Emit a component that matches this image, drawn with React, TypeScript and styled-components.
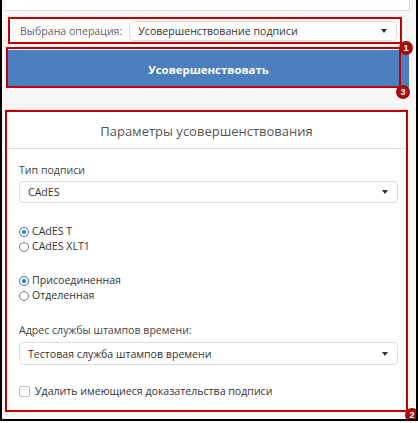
import React from "react";
import styled, { createGlobalStyle } from "styled-components";

const Global = createGlobalStyle`
  html, body { margin: 0; padding: 0; background: #ffffff; }
  body { font-family: "Open Sans", "Liberation Sans", sans-serif; }
  * { box-sizing: border-box; }
`;

const Frame = styled.div`
  width: 418px;
  height: 421px;
  border-left: 2px solid #000;
  border-right: 2px solid #000;
  border-bottom: 2px solid #000;
  background: #f6f6f6;
  display: flex;
  flex-direction: column;
  overflow: hidden;
  position: relative;
`;

const TopStrip = styled.div`
  height: 11px;
  margin: 0 6px 0 4px;
  background: #fff;
  border-bottom: 1px solid #dcdcdc;
  border-right: 1px solid #dcdcdc;
  flex-shrink: 0;
`;

const Anchor = styled.div`
  position: relative;
`;

const OperationRow = styled.div`
  margin: 6px 0 0 6px;
  width: 394px;
  height: 27px;
  border: 2px solid #c00000;
  background: #fff;
  display: flex;
  align-items: center;
  padding: 0 3px 0 10px;
  gap: 7px;
`;

const RowLabel = styled.span`
  font-size: 10.6px;
  color: #666;
  white-space: nowrap;
`;

const Select = styled.div<{ $h: number }>`
  flex: 1;
  height: ${(p) => p.$h}px;
  border: 1px solid #dedede;
  border-radius: 4px;
  background: #fff;
  display: flex;
  align-items: center;
  justify-content: space-between;
  padding: 0 9px 0 8px;
  font-size: 10.6px;
  color: #333;
`;

const Caret = styled.span`
  width: 0;
  height: 0;
  border-left: 3.5px solid transparent;
  border-right: 3.5px solid transparent;
  border-top: 4px solid #333;
`;

const Badge = styled.span<{ $top: number; $left: number }>`
  position: absolute;
  left: ${(p) => p.$left}px;
  top: ${(p) => p.$top}px;
  width: 14px;
  height: 14px;
  border-radius: 50%;
  background: #a20d0d;
  color: #fff;
  font-family: "Liberation Sans", sans-serif;
  font-weight: 700;
  font-size: 9px;
  line-height: 14px;
  text-align: center;
  z-index: 2;
`;

const ButtonWrap = styled.div`
  position: relative;
  margin: 3px 0 0 4px;
  width: 403px;
  padding-top: 3px;
`;

const ActionButton = styled.div`
  height: 38px;
  margin-left: 2px;
  background: #4b7fc0;
  color: #fff;
  font-weight: 700;
  font-size: 11.4px;
  display: flex;
  align-items: center;
  justify-content: center;
`;

const RedOverlay = styled.div`
  position: absolute;
  left: 0;
  top: 0;
  width: 395px;
  bottom: 0;
  border: 2px solid #c00000;
  pointer-events: none;
`;

const ParamsCard = styled.div`
  position: relative;
  margin: 22px 0 0 3px;
  width: 403px;
  height: 302px;
  background: #fff;
  border: 2px solid #c00000;
  box-shadow: 0 -1px 0 #dcdcdc;
  display: flex;
  flex-direction: column;
`;

const CardHeader = styled.div`
  height: 37px;
  border-bottom: 1px solid #dedede;
  display: flex;
  align-items: center;
  justify-content: center;
  font-size: 13px;
  color: #555;
  padding-top: 1px;
`;

const CardBody = styled.div`
  padding: 13px 8px 0 12px;
  display: flex;
  flex-direction: column;
`;

const FieldLabel = styled.div`
  font-size: 10.6px;
  color: #444;
  line-height: 16px;
`;

const SelectWrap = styled.div<{ $mt: number }>`
  margin-top: ${(p) => p.$mt}px;
  display: flex;
`;

const Group = styled.div<{ $mt: number }>`
  margin-top: ${(p) => p.$mt}px;
  display: flex;
  flex-direction: column;
`;

const Option = styled.div`
  display: flex;
  align-items: center;
  height: 15px;
  line-height: 15px;
  font-size: 10.6px;
  color: #333;
  gap: 2px;
`;

const Radio = styled.span<{ $on?: boolean }>`
  width: 10px;
  height: 10px;
  border-radius: 50%;
  border: 1px solid ${(p) => (p.$on ? "#2f6fd0" : "#777")};
  display: flex;
  align-items: center;
  justify-content: center;
  margin-right: 1px;
  &::after {
    content: "";
    width: 4px;
    height: 4px;
    border-radius: 50%;
    background: ${(p) => (p.$on ? "#2f6fd0" : "transparent")};
  }
`;

const CheckRow = styled.div`
  margin-top: 19px;
  display: flex;
  align-items: center;
  height: 15px;
  line-height: 15px;
  gap: 5px;
  font-size: 10.6px;
  color: #333;
`;

const CheckBox = styled.span`
  width: 11px;
  height: 11px;
  border: 1px solid #bdbdbd;
  border-radius: 2px;
  background: #fff;
`;

export default function App() {
  return (
    <>
      <Global />
      <Frame>
        <TopStrip />
        <Anchor>
          <OperationRow>
            <RowLabel>Выбрана операция:</RowLabel>
            <Select $h={20}>
              <span>Усовершенствование подписи</span>
              <Caret />
            </Select>
          </OperationRow>
          <Badge $left={397} $top={30}>1</Badge>
        </Anchor>
        <ButtonWrap>
          <ActionButton>Усовершенствовать</ActionButton>
          <RedOverlay />
          <Badge $left={390} $top={38}>3</Badge>
        </ButtonWrap>
        <ParamsCard>
          <CardHeader>Параметры усовершенствования</CardHeader>
          <CardBody>
            <FieldLabel>Тип подписи</FieldLabel>
            <SelectWrap $mt={3}>
              <Select $h={22}>
                <span>CAdES</span>
                <Caret />
              </Select>
            </SelectWrap>
            <Group $mt={21}>
              <Option>
                <Radio $on />
                CAdES T
              </Option>
              <Option>
                <Radio />
                CAdES XLT1
              </Option>
            </Group>
            <Group $mt={19}>
              <Option>
                <Radio $on />
                Присоединенная
              </Option>
              <Option>
                <Radio />
                Отделенная
              </Option>
            </Group>
            <Group $mt={19}>
              <FieldLabel>Адрес службы штампов времени:</FieldLabel>
            </Group>
            <SelectWrap $mt={4}>
              <Select $h={23}>
                <span>Тестовая служба штампов времени</span>
                <Caret />
              </Select>
            </SelectWrap>
            <CheckRow>
              <CheckBox />
              Удалить имеющиеся доказательства подписи
            </CheckRow>
          </CardBody>
          <Badge $left={398} $top={296}>2</Badge>
        </ParamsCard>
      </Frame>
    </>
  );
}
